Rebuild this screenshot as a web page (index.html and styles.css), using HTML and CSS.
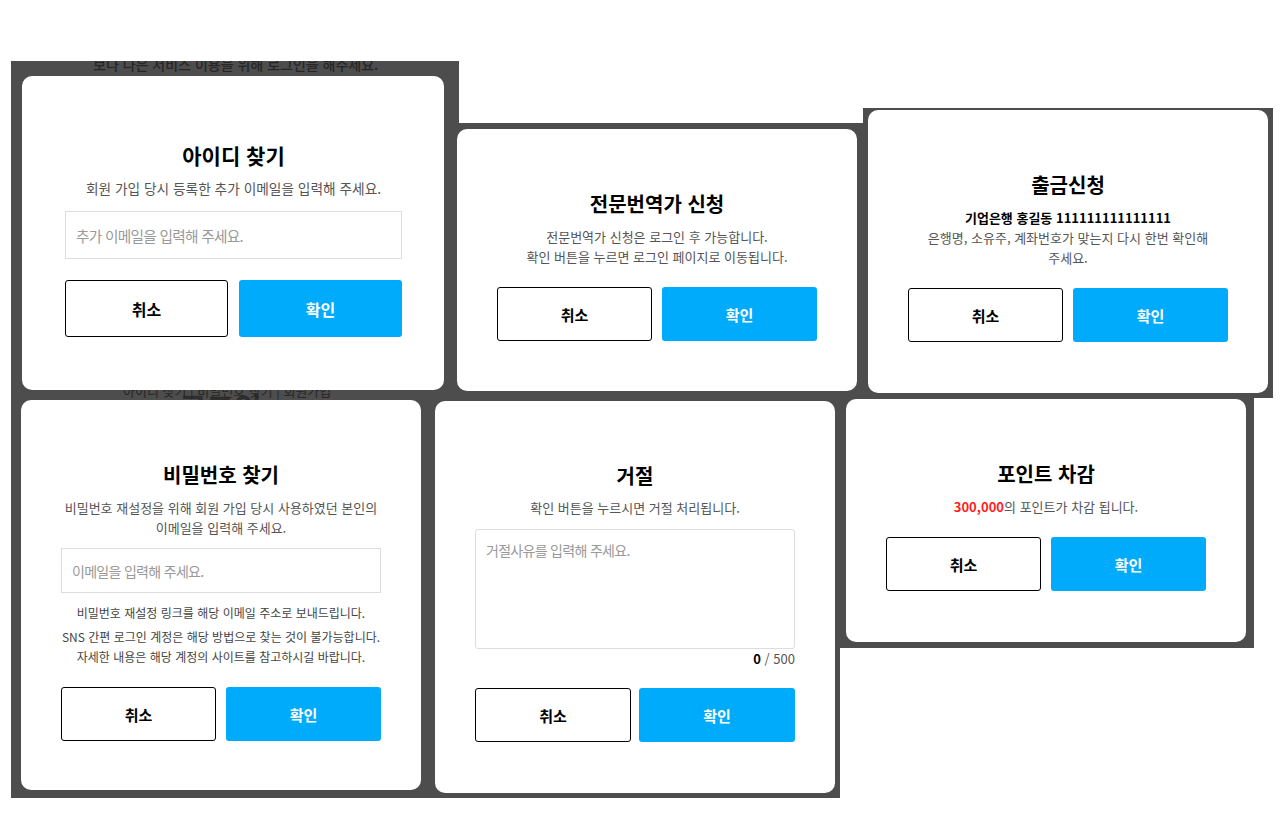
FILE: index.html
```html
<!DOCTYPE html>
<html lang="ko">
<head>
    <meta charset="utf-8">
    <title>모달 모음</title>
    <link rel="stylesheet" href="styles.css">
</head>
<body>
    <div class="canvas">

        <!-- 아이디 찾기 -->
        <div class="tile tile-a">
            <p class="under under-top">보다 나은 서비스 이용을 위해 로그인을 해주세요.</p>
            <p class="under under-big">로그인</p>
            <p class="under under-links">아이디 찾기 | 비밀번호 찾기 | 회원가입</p>
            <div class="modal modal-a">
                <h2 class="modal-title">아이디 찾기</h2>
                <p class="modal-text">회원 가입 당시 등록한 추가 이메일을 입력해 주세요.</p>
                <input class="field" type="text" placeholder="추가 이메일을 입력해 주세요.">
                <div class="btn-row">
                    <button class="btn btn-cancel">취소</button>
                    <button class="btn btn-ok">확인</button>
                </div>
            </div>
        </div>

        <!-- 전문번역가 신청 -->
        <div class="tile tile-b">
            <div class="modal modal-b">
                <h2 class="modal-title">전문번역가 신청</h2>
                <p class="modal-text">전문번역가 신청은 로그인 후 가능합니다.<br>확인 버튼을 누르면 로그인 페이지로 이동됩니다.</p>
                <div class="btn-row">
                    <button class="btn btn-cancel">취소</button>
                    <button class="btn btn-ok">확인</button>
                </div>
            </div>
        </div>

        <!-- 출금신청 -->
        <div class="tile tile-c">
            <div class="modal modal-c">
                <h2 class="modal-title">출금신청</h2>
                <p class="modal-strong">기업은행 홍길동 111111111111111</p>
                <p class="modal-text narrow">은행명, 소유주, 계좌번호가 맞는지 다시 한번 확인해 주세요.</p>
                <div class="btn-row">
                    <button class="btn btn-cancel">취소</button>
                    <button class="btn btn-ok">확인</button>
                </div>
            </div>
        </div>

        <!-- 비밀번호 찾기 -->
        <div class="tile tile-d">
            <div class="modal modal-d">
                <h2 class="modal-title">비밀번호 찾기</h2>
                <p class="modal-text">비밀번호 재설정을 위해 회원 가입 당시 사용하였던 본인의 이메일을 입력해 주세요.</p>
                <input class="field" type="text" placeholder="이메일을 입력해 주세요.">
                <p class="modal-note">비밀번호 재설정 링크를 해당 이메일 주소로 보내드립니다.</p>
                <p class="modal-note note-gap">SNS 간편 로그인 계정은 해당 방법으로 찾는 것이 불가능합니다.<br>자세한 내용은 해당 계정의 사이트를 참고하시길 바랍니다.</p>
                <div class="btn-row">
                    <button class="btn btn-cancel">취소</button>
                    <button class="btn btn-ok">확인</button>
                </div>
            </div>
        </div>

        <!-- 거절 -->
        <div class="tile tile-e">
            <div class="modal modal-e">
                <h2 class="modal-title">거절</h2>
                <p class="modal-text">확인 버튼을 누르시면 거절 처리됩니다.</p>
                <textarea class="reason" placeholder="거절사유를 입력해 주세요."></textarea>
                <p class="counter"><b>0</b> / 500</p>
                <div class="btn-row">
                    <button class="btn btn-cancel">취소</button>
                    <button class="btn btn-ok">확인</button>
                </div>
            </div>
        </div>

        <!-- 포인트 차감 -->
        <div class="tile tile-f">
            <div class="modal modal-f">
                <h2 class="modal-title">포인트 차감</h2>
                <p class="modal-text"><span class="point">300,000</span>의 포인트가 차감 됩니다.</p>
                <div class="btn-row">
                    <button class="btn btn-cancel">취소</button>
                    <button class="btn btn-ok">확인</button>
                </div>
            </div>
        </div>

    </div>
</body>
</html>
```

FILE: styles.css
```css
/* Basic page */
* {
    box-sizing: border-box;
}

body {
    margin: 0;
    background-color: #fff;
    font-family: "Noto Sans CJK KR", "Noto Sans", sans-serif;
    color: #000;
    word-break: keep-all;
}

.canvas {
    position: relative;
    width: 1280px;
    height: 832px;
    overflow: hidden;
}

/* Each tile is one captured screen: dimmed page + modal */
.tile {
    position: absolute;
    background-color: #4d4d4d;
    overflow: hidden;
}

.tile-a { left: 11px;  top: 61px;  width: 448px; height: 339px; }
.tile-b { left: 447px; top: 123px; width: 418px; height: 277px; }
.tile-c { left: 863px; top: 108px; width: 410px; height: 290px; }
.tile-d { left: 11px;  top: 400px; width: 424px; height: 398px; }
.tile-e { left: 430px; top: 400px; width: 410px; height: 398px; }
.tile-f { left: 838px; top: 398px; width: 416px; height: 250px; }

/* page text showing through the dim layer */
.under {
    position: absolute;
    margin: 0;
    color: #262626;
    white-space: nowrap;
}

.under-top {
    left: 82px;
    top: -7px;
    font-size: 14px;
    line-height: 20px;
    font-weight: 500;
}

.under-links {
    left: 112px;
    top: 322px;
    font-size: 13px;
    line-height: 16px;
}

.under-big {
    left: 168px;
    top: 328px;
    font-size: 30px;
    line-height: 34px;
    font-weight: 700;
    color: #2e2e2e;
}

/* Modal */
.modal {
    position: absolute;
    display: flex;
    flex-direction: column;
    background-color: #fff;
    border-radius: 10px;
    padding: 61px 40px 0;
    text-align: center;
}

.modal-a { left: 11px; top: 15px; width: 422px; height: 314px; padding: 64px 42px 0 43px; }
.modal-b { left: 10px; top: 6px;  width: 400px; height: 262px; }
.modal-c { left: 5px;  top: 2px;  width: 400px; height: 283px; }
.modal-d { left: 10px; top: 0;    width: 400px; height: 390px; }
.modal-e { left: 5px;  top: 1px;  width: 400px; height: 392px; }
.modal-f { left: 8px;  top: 1px;  width: 400px; height: 243px; }

.modal-title {
    margin: 0;
    font-size: 20px;
    line-height: 28px;
    font-weight: 700;
    color: #000;
}

.modal-text {
    margin: 9px 0 0;
    font-size: 13px;
    line-height: 20px;
    color: #555;
}

.modal-text.narrow {
    margin: 0 auto;
    max-width: 300px;
}

.modal-strong {
    margin: 9px 0 0;
    font-size: 13px;
    line-height: 20px;
    font-weight: 700;
    color: #000;
}

.modal-note {
    margin: 10px 0 0;
    font-size: 12px;
    line-height: 20px;
    color: #444;
}

.modal-note.note-gap {
    margin-top: 4px;
}

.point {
    color: #ff1e1e;
    font-weight: 700;
}

/* Inputs */
.field {
    width: 100%;
    height: 45px;
    margin-top: 10px;
    padding: 0 10px;
    border: 1px solid #ddd;
    border-radius: 0;
    font-family: inherit;
    font-size: 14px;
    letter-spacing: -0.05em;
    outline: none;
}

.field::placeholder,
.reason::placeholder {
    color: #999;
}

.reason {
    display: block;
    width: 100%;
    height: 120px;
    margin-top: 11px;
    padding: 10px;
    border: 1px solid #ddd;
    border-radius: 3px;
    font-family: inherit;
    font-size: 14px;
    line-height: 20px;
    letter-spacing: -0.05em;
    resize: none;
    outline: none;
}

.counter {
    margin: 0;
    font-size: 13px;
    line-height: 20px;
    text-align: right;
    color: #555;
}

.counter b {
    color: #000;
}

/* Buttons */
.btn-row {
    display: grid;
    grid-template-columns: 1fr 1fr;
    gap: 10px;
    margin-top: 20px;
}

.btn {
    height: 54px;
    border-radius: 3px;
    font-family: inherit;
    font-size: 15px;
    font-weight: 700;
    cursor: pointer;
}

.btn-cancel {
    background-color: #fff;
    border: 1px solid #000;
    color: #000;
}

.btn-ok {
    background-color: #00abfb;
    border: none;
    color: #fff;
}

/* 아이디 찾기 is captured a little larger */
.modal-a .modal-title {
    font-size: 21px;
    line-height: 30px;
}

.modal-a .modal-text {
    margin-top: 8px;
    font-size: 13.7px;
    line-height: 21px;
}

.modal-a .field {
    height: 48px;
    margin-top: 12px;
    font-size: 14.7px;
}

.modal-a .btn-row {
    gap: 11px;
    margin-top: 21px;
}

.modal-a .btn {
    height: 57px;
    font-size: 16px;
}

.modal-e .modal-text {
    margin-top: 8px;
}

.modal-e .btn-row {
    gap: 8px;
    margin-top: 19px;
}
```
